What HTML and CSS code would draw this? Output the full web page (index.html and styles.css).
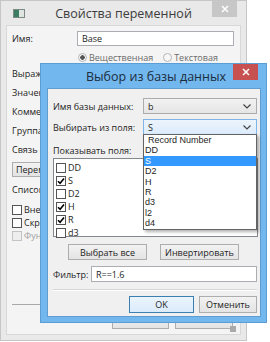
FILE: index.html
```html
<!DOCTYPE html>
<html lang="ru">
<head>
    <meta charset="UTF-8">
    <title>Выбор из базы данных</title>
    <link rel="stylesheet" href="styles.css">
</head>
<body>
    <div class="desk">
        <!-- back window: variable properties (inactive) -->
        <div class="win back">
            <div class="titlebar">
                <span class="app-icon"><span></span></span>
                <span class="title">Свойства переменной</span>
                <span class="close">
                    <svg width="8" height="8" viewBox="0 0 8 8"><path d="M1 1L7 7M7 1L1 7" stroke="#fff" stroke-width="1.5"/></svg>
                </span>
            </div>
            <div class="client">
                <div class="name-row">
                    <span>Имя:</span>
                    <div class="input">Base</div>
                </div>
                <div class="radio-row">
                    <span class="radio on"></span><span>Вещественная</span>
                    <span class="radio"></span><span>Текстовая</span>
                </div>
                <div class="labels">
                    <div>Выражение</div>
                    <div>Значение</div>
                    <div>Комментарий</div>
                    <div>Группа</div>
                    <div>Связь с</div>
                </div>
                <div class="btn wide">Переменная</div>
                <div class="list-label">Список</div>
                <div class="checks">
                    <div class="check-row"><span class="box"></span>Внешняя</div>
                    <div class="check-row"><span class="box"></span>Скрытая</div>
                    <div class="check-row disabled"><span class="box"></span>Функция</div>
                </div>
                <div class="hline"></div>
                <div class="back-buttons">
                    <div class="btn b1"></div>
                    <div class="btn b2"></div>
                </div>
                <span class="grip"></span>
            </div>
        </div>

        <!-- front window: pick from database (active) -->
        <div class="win front">
            <div class="titlebar">
                <span class="title">Выбор из базы данных</span>
                <span class="close red">
                    <svg width="8" height="8" viewBox="0 0 8 8"><path d="M1 1L7 7M7 1L1 7" stroke="#fff" stroke-width="1.5"/></svg>
                </span>
            </div>
            <div class="client">
                <div class="form-row first">
                    <span>Имя базы данных:</span>
                    <div class="combo">b<svg class="chev" width="8" height="5" viewBox="0 0 8 5"><path d="M0.5 0.5L4 4L7.5 0.5" fill="none" stroke="#444" stroke-width="1.2"/></svg></div>
                </div>
                <div class="form-row">
                    <span>Выбирать из поля:</span>
                    <div class="combo focus">S<svg class="chev" width="8" height="5" viewBox="0 0 8 5"><path d="M0.5 0.5L4 4L7.5 0.5" fill="none" stroke="#444" stroke-width="1.2"/></svg></div>
                </div>
                <div class="show-label">Показывать поля:</div>
                <div class="listbox">
                    <div class="item"><span class="box"></span>DD</div>
                    <div class="item"><span class="box on"></span>S</div>
                    <div class="item"><span class="box"></span>D2</div>
                    <div class="item"><span class="box on"></span>H</div>
                    <div class="item"><span class="box on"></span>R</div>
                    <div class="item"><span class="box"></span>d3</div>
                </div>
                <div class="pair">
                    <div class="btn">Выбрать все</div>
                    <div class="btn">Инвертировать</div>
                </div>
                <div class="filter-row">
                    <span>Фильтр:</span>
                    <div class="input">R==1.6</div>
                </div>
                <div class="sep"></div>
                <div class="actions">
                    <div class="btn ok">OK</div>
                    <div class="btn cancel">Отменить</div>
                </div>
            </div>
        </div>

        <!-- open list of the focused combo -->
        <ul class="dropdown">
            <li class="indent">Record Number</li>
            <li>DD</li>
            <li class="sel">S</li>
            <li>D2</li>
            <li>H</li>
            <li>R</li>
            <li>d3</li>
            <li>l2</li>
            <li>d4</li>
        </ul>
    </div>
</body>
</html>
```

FILE: styles.css
```css
body {
    margin: 0;
    background: #fff;
    font-family: "Open Sans", "Noto Sans", sans-serif;
    font-size: 9px;
    color: #1e1e1e;
    overflow: hidden;
}
.desk {
    position: relative;
    width: 270px;
    height: 342px;
}
.win {
    position: absolute;
    box-sizing: border-box;
    display: flex;
    flex-direction: column;
}
.titlebar {
    position: relative;
    height: 24px;
    display: flex;
    align-items: center;
    justify-content: center;
    flex-shrink: 0;
}
.title {
    font-size: 12.5px;
}
.close {
    position: absolute;
    top: 0;
    right: 4px;
    width: 25px;
    height: 16px;
    background: #c7c7c7;
    display: flex;
    align-items: center;
    justify-content: center;
}
.close.red {
    background: #c75050;
    right: 3px;
}
.btn {
    box-sizing: border-box;
    border: 1px solid #adadad;
    background: linear-gradient(#f2f2f2, #e4e4e4);
    display: flex;
    align-items: center;
    justify-content: center;
    white-space: nowrap;
}
.input {
    box-sizing: border-box;
    background: #fff;
    border: 1px solid #abadb3;
    padding-left: 4px;
    display: flex;
    align-items: center;
}
.box {
    box-sizing: border-box;
    width: 10px;
    height: 10px;
    border: 1px solid #555;
    background: #fff;
    margin-right: 2px;
    flex-shrink: 0;
}

/* back window */
.back {
    left: 0;
    top: 0;
    width: 247px;
    height: 341px;
    background: #e9e9e9;
    border: 1px solid #c6c6c6;
    padding: 0 5px 5px 5px;
}
.back .title {
    color: #3c3c3c;
}
.app-icon {
    position: absolute;
    left: 7px;
    top: 8px;
    width: 12px;
    height: 9px;
    box-sizing: border-box;
    border: 1px solid #7c8a84;
    background: #dfe5e1;
}
.app-icon span {
    display: block;
    width: 5px;
    height: 7px;
    background: #3f7d62;
}
.back .client {
    position: relative;
    flex: 1;
    background: #f4f4f4;
    border: 1px solid #d8d8d8;
    padding: 5px 6px 0 5px;
}
.name-row {
    display: grid;
    grid-template-columns: 65px 157px;
    align-items: center;
    height: 15px;
}
.name-row .input {
    height: 15px;
}
.radio-row {
    display: flex;
    align-items: center;
    height: 12px;
    margin-top: 5px;
    padding-left: 66px;
    color: #6a6a6a;
}
.radio {
    box-sizing: border-box;
    width: 9px;
    height: 9px;
    border-radius: 50%;
    border: 1px solid #b5b5b5;
    background: #f7f7f7;
    margin-right: 2px;
    margin-left: 10px;
}
.radio:first-child {
    margin-left: 0;
}
.radio.on {
    background: radial-gradient(circle, #555 0 2px, #f7f7f7 2.5px);
}
.labels {
    margin-top: 1px;
}
.labels div {
    height: 19px;
    line-height: 19px;
    white-space: nowrap;
}
.btn.wide {
    width: 100px;
    height: 15px;
    margin-top: 3px;
    justify-content: flex-start;
    padding-left: 3px;
}
.list-label {
    margin-top: 7px;
    line-height: 12px;
}
.checks {
    margin-top: 7px;
}
.check-row {
    display: flex;
    align-items: center;
    height: 13px;
}
.check-row.disabled {
    color: #a0a0a0;
}
.check-row.disabled .box {
    border-color: #c4c4c4;
    background: #eee;
}
.hline {
    margin-top: 62px;
    height: 1px;
    width: 60px;
    background: #a8a8a8;
}
.back-buttons {
    display: flex;
    gap: 6px;
    margin-top: 7px;
    padding-left: 100px;
}
.back-buttons .btn {
    height: 17px;
}
.btn.b1 {
    width: 57px;
}
.btn.b2 {
    width: 58px;
}
.grip {
    position: absolute;
    right: 4px;
    bottom: 2px;
    width: 6px;
    height: 6px;
    background: radial-gradient(circle, #aaa 0 0.8px, transparent 1px) 0 0 / 2px 2px;
}

/* front window */
.front {
    left: 40px;
    top: 63px;
    width: 227px;
    height: 260px;
    background: #72b8ef;
    border: 1px solid #5b9ed6;
    padding: 0 5px 5px 6px;
}
.front .title {
    color: #1c2c3c;
    margin-left: 4px;
}
.front .client {
    flex: 1;
    background: #f0f0f0;
    border: 1px solid #5f9dd0;
    padding: 0 3px 0 5px;
}
.form-row {
    display: grid;
    grid-template-columns: 90px 114px;
    align-items: center;
    margin-top: 5px;
    white-space: nowrap;
}
.form-row.first {
    margin-top: 9px;
}
.combo {
    box-sizing: border-box;
    height: 16px;
    border: 1px solid #acacac;
    background: linear-gradient(#f2f2f2, #e5e5e5);
    display: flex;
    align-items: center;
    padding-left: 4px;
    position: relative;
}
.combo.focus {
    border-color: #7eb4ea;
    background: linear-gradient(#ecf4fc, #dcecfc);
}
.chev {
    position: absolute;
    right: 5px;
    top: 5px;
}
.show-label {
    margin-top: 9px;
    line-height: 14px;
}
.listbox {
    box-sizing: border-box;
    width: 205px;
    height: 79px;
    background: #fff;
    border: 1px solid #828790;
    padding: 2px 0 0 2px;
}
.item {
    display: flex;
    align-items: center;
    height: 13px;
}
.box.on {
    background: #fff url("data:image/svg+xml,%3Csvg xmlns='http://www.w3.org/2000/svg' viewBox='0 0 8 8'%3E%3Cpath d='M1 4.2L3.1 6.3L7 1.6' fill='none' stroke='%23000' stroke-width='1.6'/%3E%3C/svg%3E") center / 8px 8px no-repeat;
}
.pair {
    display: flex;
    justify-content: center;
    gap: 13px;
    margin-top: 7px;
    padding-right: 3px;
}
.pair .btn {
    width: 79px;
    height: 16px;
}
.filter-row {
    display: flex;
    align-items: center;
    margin-top: 6px;
}
.filter-row span {
    width: 38px;
}
.filter-row .input {
    width: 166px;
    height: 16px;
}
.sep {
    margin-top: 7px;
    width: 204px;
    border-top: 1px solid #d5d5d5;
    border-bottom: 1px solid #fff;
}
.actions {
    display: flex;
    justify-content: flex-end;
    gap: 5px;
    margin-top: 5px;
    width: 204px;
}
.actions .btn {
    height: 17px;
}
.btn.ok {
    width: 65px;
    border-color: #3c7fb1;
    background: linear-gradient(#eaf4fc, #dcecfc);
}
.btn.cancel {
    width: 58px;
}

/* dropdown */
.dropdown {
    position: absolute;
    left: 143px;
    top: 134px;
    width: 114px;
    margin: 0;
    padding: 0;
    list-style: none;
    box-sizing: border-box;
    background: #fff;
    border: 1px solid #646464;
    box-shadow: 2px 2px 3px rgba(0, 0, 0, 0.3);
    font-family: "Liberation Sans", Arial, sans-serif;
}
.dropdown li {
    height: 10.4px;
    line-height: 10.4px;
    padding-left: 1px;
    font-size: 9px;
}
.dropdown li.indent {
    padding-left: 4px;
}
.dropdown li.sel {
    background: #3399ff;
    color: #fff;
}
```
